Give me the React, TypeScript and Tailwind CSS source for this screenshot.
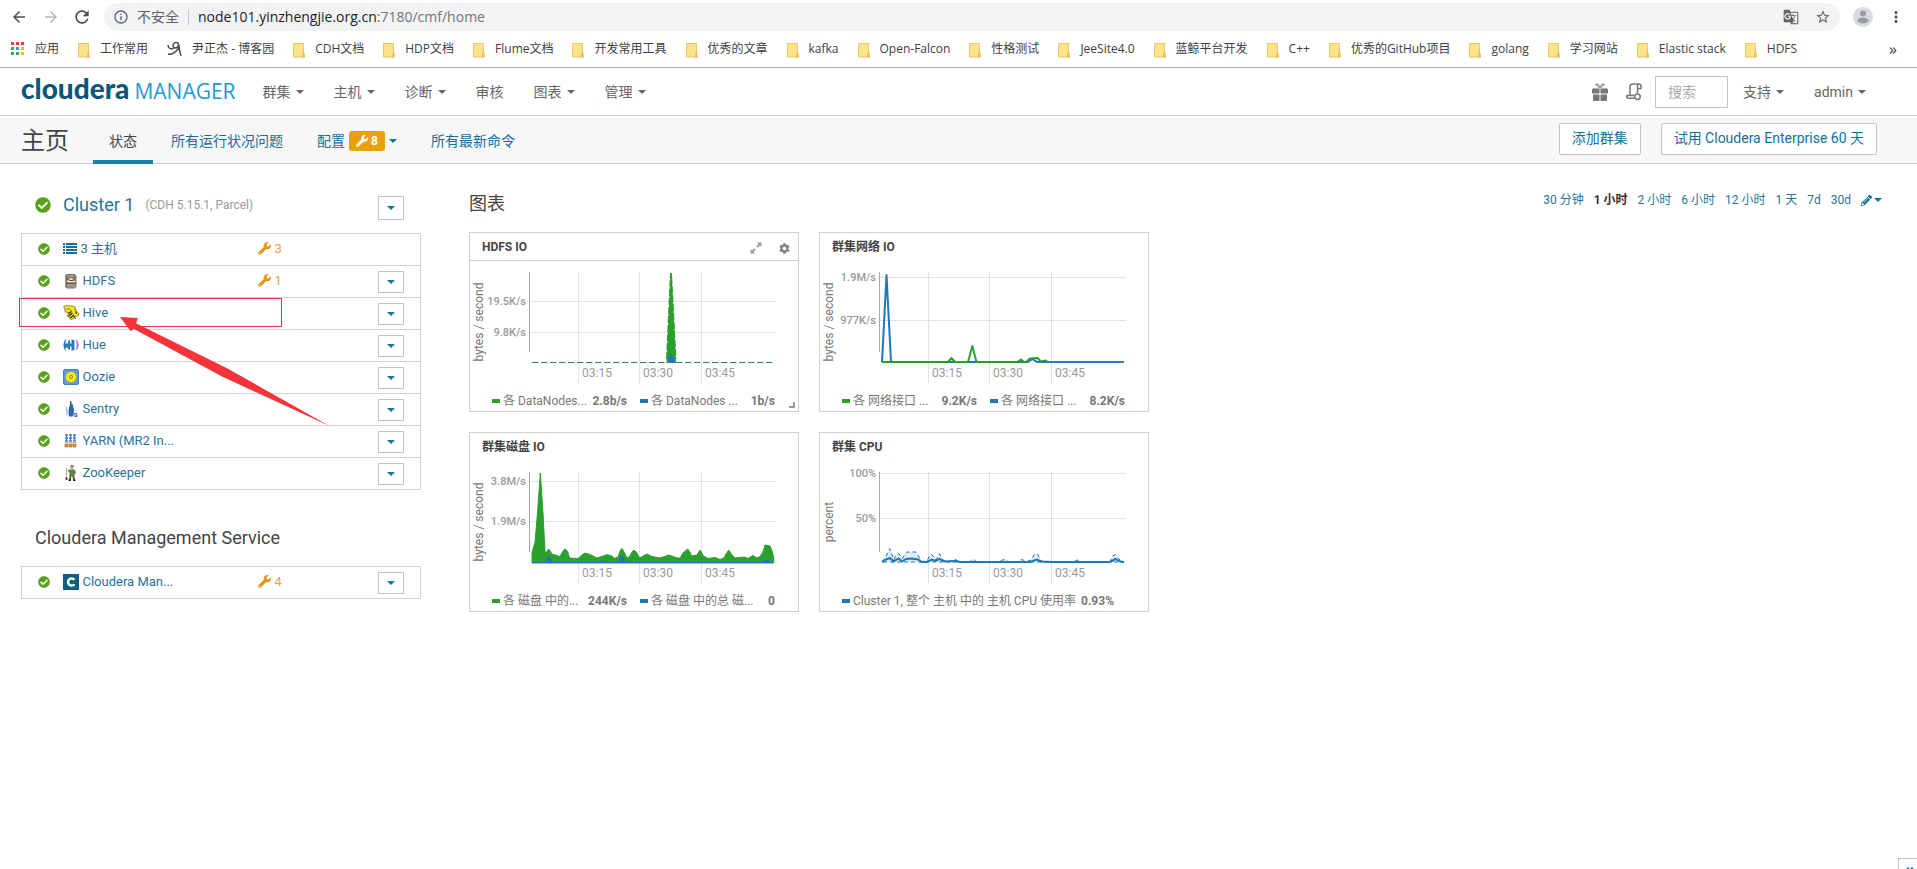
import type { ReactNode } from "react"
import { FaCheckCircle, FaCog, FaPencilAlt, FaWrench } from "react-icons/fa"
import { MdArrowBack, MdArrowForward, MdGTranslate, MdInfoOutline, MdMoreVert, MdRefresh, MdStarBorder } from "react-icons/md"

const GREEN = "#2ca02c"
const BLUE = "#1f77b4"

const FOLDERS = ["CDH文档", "HDP文档", "Flume文档", "开发常用工具", "优秀的文章", "kafka", "Open-Falcon", "性格测试", "JeeSite4.0", "蓝鲸平台开发", "C++", "优秀的GitHub项目", "golang", "学习网站", "Elastic stack", "HDFS"]

const MENUS = [
  { label: "群集", caret: true },
  { label: "主机", caret: true },
  { label: "诊断", caret: true },
  { label: "审核", caret: false },
  { label: "图表", caret: true },
  { label: "管理", caret: true },
]

const RANGES = ["30 分钟", "1 小时", "2 小时", "6 小时", "12 小时", "1 天", "7d", "30d"]

function Caret() {
  return <span className="inline-block border-x-4 border-t-4 border-x-transparent border-t-current" />
}

/* ---------- browser chrome ---------- */

function FolderIcon() {
  return (
    <svg width="12" height="17" viewBox="0 0 12 17" className="shrink-0">
      <path d="M.5 2.500h10v9.500l1 4H.5z" fill="#fde38c" stroke="#e9c662" />
      <path d="M10.500 10.500l-1.500 5.500h2.500z" fill="#f9d35f" stroke="#e3b94b" strokeWidth=".8" />
    </svg>
  )
}

function AppsIcon() {
  const colors = ["#ea4335", "#ea4335", "#ea4335", "#34a853", "#4285f4", "#fbbc05", "#34a853", "#34a853", "#fbbc05"]
  return (
    <svg width="14" height="14" viewBox="0 0 14 14" className="shrink-0">
      {colors.map((c, i) => (
        <rect key={i} x={(i % 3) * 5} y={Math.floor(i / 3) * 5} width="3" height="3" fill={c} />
      ))}
    </svg>
  )
}

function BlogIcon() {
  return (
    <svg width="15" height="16" viewBox="0 0 15 16" fill="none" stroke="#444" strokeWidth="1.400" className="shrink-0">
      <path d="M1 4c0 3 2 4.500 5.500 3.500M6 5c0-3 2-4 4-3.500 2 .5 2 4 0 5S6.500 7 6 5zM11.500 3c1 3 .5 6 2.500 12M1 13c3 1 7-1 11-6" />
    </svg>
  )
}

function Bookmark({ icon, label }: { icon: ReactNode; label: string }) {
  return (
    <a href="#" className="flex shrink-0 items-center gap-[10px] whitespace-nowrap">
      {icon}
      {label}
    </a>
  )
}

function BrowserBar() {
  return (
    <div className="border-b border-[#a9adb0] font-['Open_Sans','Noto_Sans_CJK_SC',sans-serif] text-[#3c4043]">
      <div className="flex items-center pt-[3px] pr-3 pl-[10px]">
        <button aria-label="后退" className="text-lg text-[#4a4d51]"><MdArrowBack /></button>
        <button aria-label="前进" className="ml-[14px] text-lg text-[#b4b6b9]"><MdArrowForward /></button>
        <button aria-label="刷新" className="ml-3 text-xl text-[#4a4d51]"><MdRefresh /></button>
        <div className="ml-3 flex h-7 flex-1 items-center rounded-full bg-[#f1f3f4] pr-[9px] pl-[9px]">
          <MdInfoOutline className="text-base text-[#5f6368]" />
          <span className="ml-2 text-sm leading-5 text-[#5f6368]">不安全</span>
          <span className="mx-[9px] h-4 w-px bg-[#c3c6ca]" />
          <span className="text-sm leading-5 text-[#202124]">
            node101.yinzhengjie.org.cn<span className="text-[#73777b]">:7180/cmf/home</span>
          </span>
          <div className="ml-auto flex items-center gap-4 text-[#5f6368]">
            <button aria-label="翻译" className="text-base"><MdGTranslate /></button>
            <button aria-label="收藏" className="text-base"><MdStarBorder /></button>
          </div>
        </div>
        <span className="ml-[13px] flex size-5 items-center justify-center rounded-full bg-[#d9dbde]">
          <svg width="12" height="14" viewBox="0 0 12 14" fill="#9a9da1">
            <circle cx="6" cy="3.500" r="3" />
            <ellipse cx="6" cy="10.500" rx="5.500" ry="3" />
          </svg>
        </span>
        <button aria-label="菜单" className="ml-[14px] text-lg text-[#4a4d51]"><MdMoreVert /></button>
      </div>
      <div className="flex h-9 items-center gap-[19px] overflow-hidden pr-5 pl-[11px] text-xs">
        <Bookmark icon={<AppsIcon />} label="应用" />
        <Bookmark icon={<FolderIcon />} label="工作常用" />
        <Bookmark icon={<BlogIcon />} label="尹正杰 - 博客园" />
        {FOLDERS.map((b) => (
          <Bookmark key={b} icon={<FolderIcon />} label={b} />
        ))}
        <button aria-label="更多书签" className="ml-auto text-base">»</button>
      </div>
    </div>
  )
}

/* ---------- cloudera header ---------- */

function GiftIcon() {
  return (
    <svg width="16" height="18" viewBox="0 0 16 18" fill="#777">
      <path d="M1 5.500h6.500v5H0v-4zM8.500 5.500H15l1 1v4H8.500zM1 11.500h6.500V18H2a1 1 0 0 1-1-1zM8.500 11.500H15V17a1 1 0 0 1-1 1H8.500z" />
      <path d="M7.500 5L3.500 1.500 6 1l2 3.500L10 1l2.500.5L8.500 5" fill="none" stroke="#777" />
    </svg>
  )
}

function CommandsIcon() {
  return (
    <svg width="16" height="18" viewBox="0 0 16 18" fill="none" stroke="#777" strokeWidth="1.500">
      <path d="M4 12V3.500A2.500 2.500 0 0 1 6.500 1H13a2 2 0 0 1 2 2v2.500h-3.500V10M13 1a1.800 1.800 0 0 0-1.500 2v3M8 15.200H2.500A1.700 1.700 0 0 1 1 12.500h7" />
      <circle cx="11.500" cy="13.700" r="2.700" />
    </svg>
  )
}

function Header() {
  return (
    <header className="flex h-12 items-center border-b border-[#d4d4d4] pr-9 pl-[21px] text-sm text-[#666]">
      <a href="#" className="flex items-baseline gap-[5px] pb-1 whitespace-nowrap">
        <span className="font-['Lato'] text-[28px] leading-8 font-black text-[#0c5678]">cloudera</span>
        <span className="font-['Open_Sans'] text-[21px] leading-8 text-[#1b9bd3]">MANAGER</span>
      </a>
      <nav className="ml-3 flex">
        {MENUS.map((m) => (
          <button key={m.label} className="flex items-center gap-[5px] px-[15px]">
            {m.label}
            {m.caret && <Caret />}
          </button>
        ))}
      </nav>
      <div className="ml-auto flex items-center">
        <button aria-label="礼物"><GiftIcon /></button>
        <button aria-label="命令" className="ml-[18px]"><CommandsIcon /></button>
        <input
          aria-label="搜索"
          placeholder="搜索"
          className="ml-[13px] h-8 w-[73px] border border-[#c4c4c4] bg-white px-3 placeholder:text-[#aaa]"
        />
        <button className="flex items-center gap-[5px] px-[15px]">支持 <Caret /></button>
        <button className="flex items-center gap-[5px] px-[15px]">admin <Caret /></button>
      </div>
    </header>
  )
}

function SubHeader() {
  return (
    <div className="mt-[2px] flex h-[46px] items-center border-b border-[#cfcfcf] bg-[#f7f7f7] pr-10 pl-[21px] text-sm text-[#0f719c]">
      <h1 className="text-2xl text-[#444]">主页</h1>
      <div className="-mb-px ml-6 flex h-[46px] gap-[2px]">
        <a href="#" className="flex items-center border-b-4 border-[#1483aa] px-4 pt-1 text-[#444]">状态</a>
        <a href="#" className="flex items-center px-4">所有运行状况问题</a>
        <button className="flex items-center gap-1 px-4">
          配置
          <span className="flex h-5 items-center gap-[3px] rounded-[3px] bg-[#e8a00c] px-[7px] text-xs font-bold text-white">
            <FaWrench className="size-3" />8
          </span>
          <Caret />
        </button>
        <a href="#" className="flex items-center px-4">所有最新命令</a>
      </div>
      <div className="ml-auto flex gap-5 pb-1">
        <button className="h-8 rounded-[2px] border border-[#c4c4c4] bg-white px-3 pb-px">添加群集</button>
        <button className="h-8 rounded-[2px] border border-[#c4c4c4] bg-white px-3 pb-px">试用 Cloudera Enterprise 60 天</button>
      </div>
    </div>
  )
}

/* ---------- service icons ---------- */

function HostsIcon() {
  return (
    <svg width="14" height="11" viewBox="0 0 14 11" fill="#0f719c">
      <path d="M0 0h2v2H0zM3 0h11v2H3zM0 3h2v2H0zM3 3h11v2H3zM0 6h2v2H0zM3 6h11v2H3zM0 9h2v2H0zM3 9h11v2H3z" />
    </svg>
  )
}

function HdfsIcon() {
  return (
    <svg width="16" height="16" viewBox="0 0 16 16">
      <path d="M3.500 1h8l2 2v10l-1.500 2.500h-8L2 13.500V3z" fill="#7d6f60" />
      <path d="M4 2h7v2.500H4zM4 11h8v3.500H4z" fill="#a29482" />
      <path d="M4 6.500l4-1.500 4.500 2.500-1 2.500H4.500z" fill="#efe9df" />
      <path d="M4 6.500l4 1 4-.5M3 10h9.500" stroke="#4d4338" fill="none" />
      <path d="M2.500 4v9M13 4v8" stroke="#b8ab9b" strokeWidth=".8" />
    </svg>
  )
}

function HiveIcon() {
  return (
    <svg width="16" height="16" viewBox="0 0 16 16">
      <path d="M.6 1.500C3 .4 6 .8 9 1l3 .8 1.500 4.700 2 1.500v2.500l-3.500 1L10 14l-2 .8L4.500 11l.7-3.500-3-.5L2 4.500z" fill="#f4e61e" stroke="#6b6410" strokeWidth=".7" />
      <path d="M5.500 8.500l3-2M5.500 11l4-3M7 13l4-3" stroke="#2a2708" strokeWidth="1.200" />
      <path d="M2.500 4.500c3-1.500 5 0 6.500 1.500M11.500 4l2.500 5" fill="none" stroke="#6b6410" strokeWidth=".7" />
      <path d="M11 11l1.500 3" stroke="#222" />
      <circle cx="13" cy="8" r=".8" fill="#222" />
    </svg>
  )
}

function HueIcon() {
  return (
    <svg width="16" height="16" viewBox="0 0 16 16">
      <path d="M3.500 1.800C-.5 4 -.5 12 3.500 14.200c-1-2-1-3-1-3.700h2.200L5 12l2 1V9.500h1.500V14l3-1.500V3.500L8.500 2v4.500H7V3L5 4v2.500H2.500c0-2 .2-3 1-4.700z" fill="#2b7ab8" />
      <path d="M12.500 2c4 2.500 4 9.500 0 12 1.500-3 1.500-9 0-12z" fill="#9d74b8" />
    </svg>
  )
}

function OozieIcon() {
  return (
    <svg width="16" height="16" viewBox="0 0 16 16">
      <rect x=".5" y=".5" width="15" height="15" rx="1.500" fill="#5f9bdc" stroke="#4680c0" />
      <circle cx="8" cy="8" r="5.500" fill="#f8ea1f" stroke="#8fa03a" strokeWidth=".6" />
      <circle cx="8" cy="8" r="2" fill="#8c8c28" />
      <circle cx="8" cy="8" r="1" fill="#f8ea1f" />
    </svg>
  )
}

function SentryIcon() {
  return (
    <svg width="16" height="16" viewBox="0 0 16 16">
      <path d="M7 0h1.500v2.500L10 4v1.500L11 8l-.5 6.500-1 1H6l-.5-4 .5-5L7 4z" fill="#2a66a8" />
      <path d="M2.500 4l2.500 5-.5 6-1.500-1.500z" fill="#a9cdea" />
      <text x="10.500" y="15.500" fontSize="8" fontWeight="700" fill="#2a66a8">s</text>
    </svg>
  )
}

function YarnIcon() {
  return (
    <svg width="16" height="16" viewBox="0 0 16 16">
      {[2, 6, 10].map((x) => (
        <g key={x}>
          <path d={`M${x} 2h3M${x} 5h3M${x} 8h3`} stroke="#4f7ed0" strokeWidth="1.500" />
          <path d={`M${x + 1.5} 1v7`} stroke="#4f7ed0" strokeWidth="1.500" />
          <rect x={x} y="11" width="3" height="3" fill="#e59a2b" stroke="#a8611c" strokeWidth=".6" />
        </g>
      ))}
      <path d="M2 9.500h11" stroke="#9a8a90" strokeWidth=".6" />
    </svg>
  )
}

function ZooKeeperIcon() {
  return (
    <svg width="16" height="16" viewBox="0 0 16 16">
      <path d="M7.500.3h3l.5 1.500H7z" fill="#4b6b35" />
      <circle cx="9" cy="2.500" r="1.500" fill="#c9956b" />
      <path d="M6 4.500h6l1 4-1.500.5V11h-5V7.500L4.500 6z" fill="#5d8244" />
      <path d="M6.500 10.500h2L8 15H6zM9.200 10.500h2L12 15h-2z" fill="#47632f" />
      <path d="M5.500 15.200H8M10 15.200h2.500" stroke="#3b2418" strokeWidth="1.400" />
      <path d="M3.500 3v10" stroke="#a09080" strokeWidth=".8" />
      <path d="M2 12.500h2.500V15H3z" fill="#6a1e35" />
    </svg>
  )
}

function ClouderaIcon() {
  return (
    <svg width="16" height="16" viewBox="0 0 16 16">
      <rect width="16" height="16" fill="#0d5f80" />
      <path d="M11.500 5.800A3.600 3.600 0 1 0 11.500 10.200" fill="none" stroke="#fff" strokeWidth="2.500" />
    </svg>
  )
}

/* ---------- clusters ---------- */

interface Service {
  name: string
  icon: ReactNode
  issues?: number
  menu?: boolean
}

const SERVICES: Service[] = [
  { name: "3 主机", icon: <HostsIcon />, issues: 3, menu: false },
  { name: "HDFS", icon: <HdfsIcon />, issues: 1 },
  { name: "Hive", icon: <HiveIcon /> },
  { name: "Hue", icon: <HueIcon /> },
  { name: "Oozie", icon: <OozieIcon /> },
  { name: "Sentry", icon: <SentryIcon /> },
  { name: "YARN (MR2 In...", icon: <YarnIcon /> },
  { name: "ZooKeeper", icon: <ZooKeeperIcon /> },
]

const MGMT: Service[] = [{ name: "Cloudera Man...", icon: <ClouderaIcon />, issues: 4 }]

function MenuButton({ name, className }: { name: string; className: string }) {
  return (
    <button
      aria-label={`${name} 操作`}
      className={`flex w-[26px] items-center justify-center border border-[#c4c4c4] bg-white text-[#0b7a94] ${className}`}
    >
      <Caret />
    </button>
  )
}

function ServiceTable({ services }: { services: Service[] }) {
  return (
    <table className="w-full table-fixed border-collapse border border-[#d3d3d3] text-[13px] leading-5">
      <tbody>
        {services.map((s) => (
          <tr key={s.name} className="h-8 border-b border-[#d3d3d3]">
            <td className="w-[41px] pb-[2px] pl-4">
              <FaCheckCircle className="size-3 text-[#5b9f1c]" />
            </td>
            <td className="w-[195px] pb-[2px]">
              <a href="#" className={`flex items-center text-[#27739b] ${s.menu === false ? "gap-1" : "gap-1"}`}>
                {s.icon}
                {s.name}
              </a>
            </td>
            <td className="pb-[2px]">
              {s.issues && (
                <a href="#" className="flex items-center gap-1 text-[#e8a23c]">
                  <FaWrench className="size-[13px] text-[#e8941c]" />
                  {s.issues}
                </a>
              )}
            </td>
            <td className="w-[43px]">{s.menu !== false && <MenuButton name={s.name} className="h-[22px]" />}</td>
          </tr>
        ))}
      </tbody>
    </table>
  )
}

function Clusters() {
  return (
    <section className="relative w-[400px] shrink-0">
      <div className="flex h-[69px] items-center pt-3 pr-[17px] pl-[14px]">
        <FaCheckCircle className="size-4 text-[#5b9f1c]" />
        <a href="#" className="ml-3 text-lg text-[#27739b]">Cluster 1</a>
        <span className="ml-[11px] pt-px text-xs text-[#999]">(CDH 5.15.1, Parcel)</span>
        <span className="ml-auto pt-[6px]">
          <MenuButton name="Cluster 1" className="h-6" />
        </span>
      </div>
      <ServiceTable services={SERVICES} />
      <h2 className="pt-[34px] pb-[14px] pl-[14px] text-lg text-[#444]">Cloudera Management Service</h2>
      <ServiceTable services={MGMT} />

      {/* callout on the Hive row */}
      <div className="pointer-events-none absolute top-[134px] -left-[2px] h-[29px] w-[263px] border border-[#d03a44]" />
      <svg className="pointer-events-none absolute top-[152px] left-[98px]" width="212" height="112" viewBox="0 0 212 112">
        <path d="M1 1l18 1-2 5.300 91 45L210.500 110 103 60.500 15 13l-3.500 2z" fill="#f5333a" />
      </svg>
    </section>
  )
}

/* ---------- charts ---------- */

interface Tick {
  y: number
  label: string
}

interface Legend {
  color: string
  label: string
  value: string
}

interface ChartProps {
  title: string
  unit: string
  ticks: Tick[]
  legend: Legend[]
  active?: boolean
  children: ReactNode
}

const X_TICKS = [
  { x: 108, label: "03:15" },
  { x: 169, label: "03:30" },
  { x: 231, label: "03:45" },
]

function ChartCard({ title, unit, ticks, legend, active, children }: ChartProps) {
  return (
    <article className="relative h-[180px] border border-[#d0d0d0] bg-white">
      <div className={`flex h-7 items-center justify-between border-b pr-2 pl-3 ${active ? "border-[#d0d0d0]" : "border-transparent"}`}>
        <h3 className="text-xs font-bold text-[#444]">{title}</h3>
        {active && (
          <div className="flex items-center gap-[17px] pt-[3px] text-[#888]">
            <button aria-label="展开">
              <svg width="12" height="12" viewBox="0 0 12 12" fill="#999">
                <path d="M7 .5h4.500V5L10 3.500 7.800 5.700 6.300 4.200 8.500 2zM5 11.500H.5V7L2 8.500l2.200-2.200 1.500 1.500L3.500 10z" />
              </svg>
            </button>
            <button aria-label="设置"><FaCog className="size-[11px]" /></button>
          </div>
        )}
      </div>
      <svg width="328" height="128" viewBox="0 0 328 128" className="font-['Roboto',sans-serif]">
        <g stroke="#e2e2e2">
          {ticks.map((t) => (
            <path key={t.label} d={`M60 ${t.y + 0.5}H306`} />
          ))}
          {X_TICKS.map((t) => (
            <path key={t.label} d={`M${t.x + 0.5} 11V123`} />
          ))}
        </g>
        <path d="M59.500 11V91" stroke="#aaa" />
        <g fontSize="11" fontWeight="500" fill="#999" textAnchor="end">
          {ticks.map((t) => (
            <text key={t.label} x="56" y={t.y + 4}>{t.label}</text>
          ))}
        </g>
        <g fontSize="12" fill="#999">
          {X_TICKS.map((t) => (
            <text key={t.label} x={t.x + 4} y="116">{t.label}</text>
          ))}
        </g>
        <text transform="translate(13 61) rotate(-90)" fontSize="12" fill="#777" textAnchor="middle">{unit}</text>
        {children}
      </svg>
      <div className="flex gap-[13px] pr-[23px] pl-[22px] text-xs leading-6 text-[#777]">
        {legend.map((l) => (
          <div key={l.label} className={`flex items-center whitespace-nowrap ${legend.length > 1 ? "flex-1 justify-between" : "gap-[5px]"}`}>
            <span className="flex items-center gap-[3px]">
              <span className="h-1 w-2" style={{ background: l.color }} />
              {l.label}
            </span>
            <b>{l.value}</b>
          </div>
        ))}
      </div>
      {active && <span className="absolute right-[3px] bottom-[3px] size-[6px] border-r-2 border-b-2 border-[#999]" />}
    </article>
  )
}

function Charts() {
  return (
    <section className="min-w-0 flex-1">
      <div className="flex h-[68px] justify-between pt-[26px] pr-[35px]">
        <h2 className="text-lg leading-7 text-[#444]">图表</h2>
        <div className="flex h-5 items-center gap-[10px] text-xs text-[#27739b]">
          {RANGES.map((r) => (
            <a key={r} href="#" className={r === "1 小时" ? "font-bold text-[#333]" : ""}>{r}</a>
          ))}
          <button aria-label="编辑" className="flex items-center gap-[2px] text-[#0b7a94]">
            <FaPencilAlt className="size-[11px]" />
            <Caret />
          </button>
        </div>
      </div>

      <div className="grid grid-cols-[repeat(2,330px)] gap-5">
        <ChartCard
          active
          title="HDFS IO"
          unit="bytes / second"
          ticks={[{ y: 40, label: "19.5K/s" }, { y: 71, label: "9.8K/s" }]}
          legend={[
            { color: GREEN, label: "各 DataNodes...", value: "2.8b/s" },
            { color: BLUE, label: "各 DataNodes ...", value: "1b/s" },
          ]}
        >
          <path d="M196.500 102L200.500 12h1L206 102z" fill={GREEN} />
          <path d="M197 98L201 12L205.500 98" fill="none" stroke={GREEN} strokeWidth="2" strokeDasharray="7 2" />
          <path d="M197 102l1-5 3-5 3 5 1.500 5z" fill={BLUE} />
          <path d="M62 101.500H304" stroke={BLUE} strokeDasharray="6 3" />
          <path d="M62 101.500H304" stroke={GREEN} strokeOpacity=".5" strokeDasharray="7 2" />
        </ChartCard>

        <ChartCard
          title="群集网络 IO"
          unit="bytes / second"
          ticks={[{ y: 16, label: "1.9M/s" }, { y: 59, label: "977K/s" }]}
          legend={[
            { color: GREEN, label: "各 网络接口 ...", value: "9.2K/s" },
            { color: BLUE, label: "各 网络接口  ...", value: "8.2K/s" },
          ]}
        >
          <g fill="none" strokeWidth="2" strokeLinejoin="round">
            <path d="M62 101L66.500 14L71 101H208L212.500 98L217 101H304" stroke={BLUE} />
            <path d="M62 101H128L131.500 97L135 101H148L152.300 85L156.500 101H197L201 98.500L204 101H206L210 97.500L217.500 97L221 100.500L225.500 99.500L228 101H304" stroke={GREEN} />
          </g>
          <path d="M228 101.500H304" stroke={BLUE} />
        </ChartCard>

        <ChartCard
          title="群集磁盘 IO"
          unit="bytes / second"
          ticks={[{ y: 20, label: "3.8M/s" }, { y: 60, label: "1.9M/s" }]}
          legend={[
            { color: GREEN, label: "各 磁盘 中的...", value: "244K/s" },
            { color: BLUE, label: "各 磁盘 中的总 磁...", value: "0" },
          ]}
        >
          <path
            d="M62 102V92L65 81 67.500 52 70.300 12 73 52 75 91 77 91 78.700 88 82 93 90 95.500 93 90 94.700 88 97.500 90 99.500 97 108 97.500 112 94 115 92 120 93.500 127 97 137 93.700 142 95 144 97.500 148 96 150 90 152 87.300 154 91 157 97 160 95 162 91 164 89 167 92 169.500 97 177 93 182 95.500 190 97 199 94 207 97 210 97 213 92 217.700 88 220 91 221.500 95 227 94 230 89 233.500 95 238 97.500 245 96.500 250 98.500 254 97 256 93 258.700 89 262 94 265 97 274 96 278 97.500 282.700 94.500 287 97 290 95.500 293 91 295 84 300 85 302 90 303.700 96V102z"
            fill={GREEN}
            stroke={GREEN}
          />
          <path d="M75 102l2-6 2-1 4 7zM129 102l1.500-3 2 3zM148 102l1-5 3-4 2 4 2 5zM290 102l4-3h5l2 3z" fill={BLUE} />
          <path d="M62 101.500H304" stroke={BLUE} />
        </ChartCard>

        <ChartCard
          title="群集 CPU"
          unit="percent"
          ticks={[{ y: 12, label: "100%" }, { y: 57, label: "50%" }]}
          legend={[{ color: BLUE, label: "Cluster 1, 整个 主机 中的 主机 CPU 使用率", value: "0.93%" }]}
        >
          <path
            d="M62 101L66 95.500 69.700 87.500 72.500 95 74 99 76 94 78.700 92.500 82.500 97.500 85 93 87.500 91 96 91 98.500 95 101.500 100.500 107.500 100 109 95 111.700 93.500 114.500 97 116 99 119.300 92.500 122.500 98.500 127 101 135.500 98.500 140 101 150 100.500 153.300 98 156.500 101 177 101 184 98.500 190 101 196 101 201.500 98.500 207 100.500 211 99 214 94 217.300 92.500 220.500 99 224 101 254 100.500 257.500 99 262 101 290 101 292.500 95 295.500 93.500 300 99 304 101z"
            fill="#dcecf8"
            stroke={BLUE}
            strokeDasharray="4 3"
          />
          <path
            d="M62 101L66 98.500 70 97 73.500 100.500 78.500 97.500 82 100.500 86 98 92 97.500 98 98.500 102 101H107L112 98.500 115.500 100 119.500 98 124 100.500 135 100 140 101H210L217 98.500 221 100.500 232 101H290L295.500 98 300 100.500 304 101"
            fill="none"
            stroke={BLUE}
            strokeWidth="2"
          />
        </ChartCard>
      </div>
    </section>
  )
}

export default function App() {
  return (
    <div className="min-h-screen bg-white font-['Roboto','Noto_Sans_CJK_SC',sans-serif]">
      <BrowserBar />
      <Header />
      <SubHeader />
      <main className="flex gap-12 pl-[21px]">
        <Clusters />
        <Charts />
      </main>
      <button
        aria-label="展开面板"
        className="fixed right-0 bottom-0 flex h-[11px] w-[19px] items-start justify-center overflow-hidden border-t border-l border-[#c4c4c4] bg-white pt-2 pl-1 text-[#0b7a94]"
      >
        <svg width="10" height="8" viewBox="0 0 10 8" fill="none" stroke="currentColor" strokeWidth="1.500" className="shrink-0">
          <path d="M1 4l2-3 2 3M5 4l2-3 2 3" />
        </svg>
      </button>
    </div>
  )
}
